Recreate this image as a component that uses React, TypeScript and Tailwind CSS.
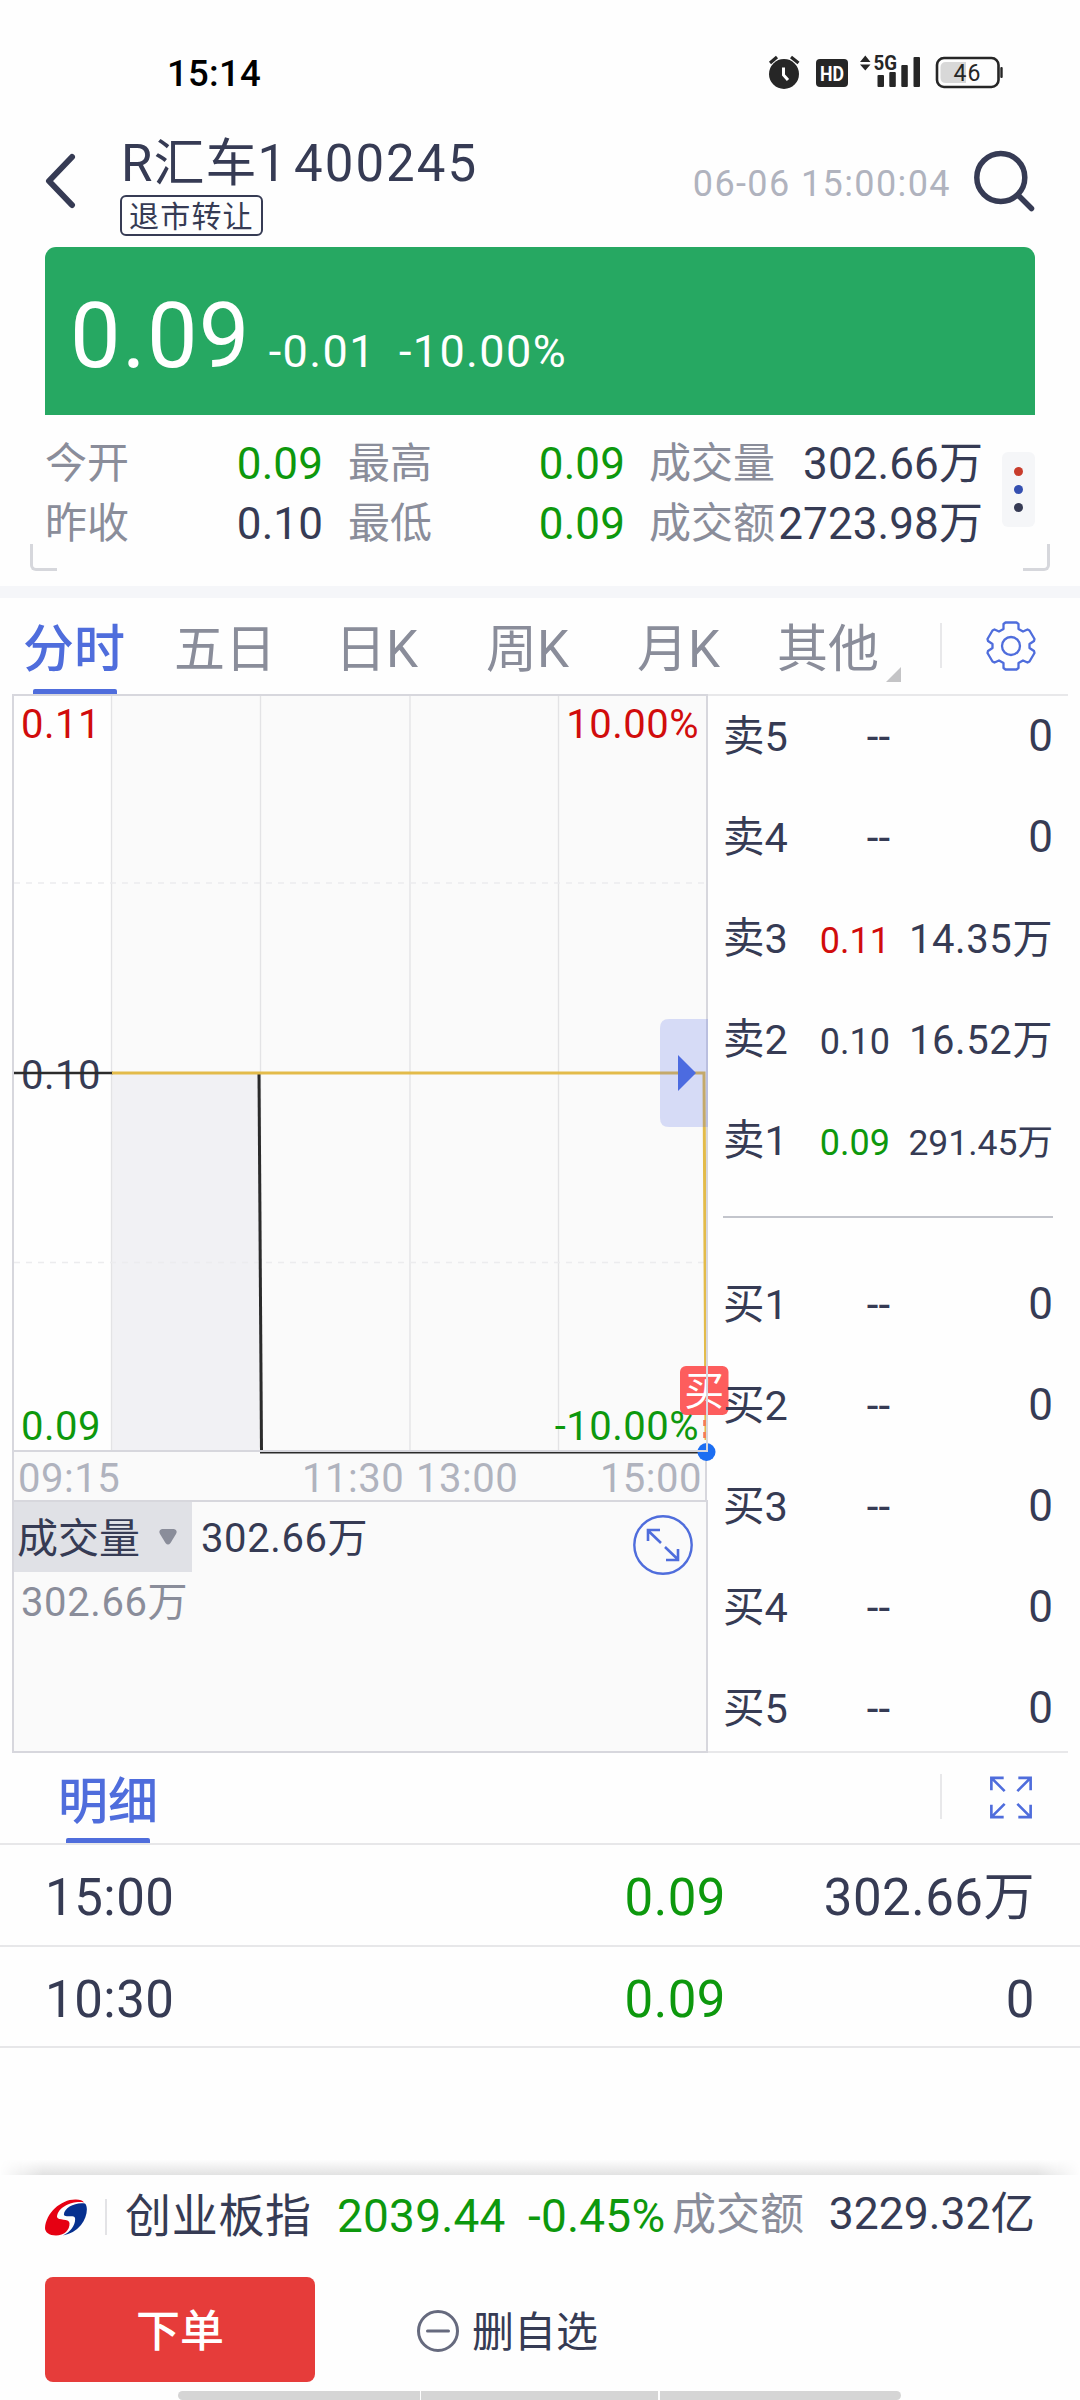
import React from "react";

const tabs = [
  { label: "五日", width: "w-[161px]" },
  { label: "日K", width: "w-[151px]" },
  { label: "周K", width: "w-[151px]" },
  { label: "月K", width: "w-[140px]" },
];

type Level = { name: string; price: string; qty: string; tone?: string; small?: boolean };

const sells: Level[] = [
  { name: "卖5", price: "--", qty: "0" },
  { name: "卖4", price: "--", qty: "0" },
  { name: "卖3", price: "0.11", qty: "14.35万", tone: "text-[#d10c0c]" },
  { name: "卖2", price: "0.10", qty: "16.52万" },
  { name: "卖1", price: "0.09", qty: "291.45万", tone: "text-[#0d980d]", small: true },
];

const buys: Level[] = [
  { name: "买1", price: "--", qty: "0" },
  { name: "买2", price: "--", qty: "0" },
  { name: "买3", price: "--", qty: "0" },
  { name: "买4", price: "--", qty: "0" },
  { name: "买5", price: "--", qty: "0" },
];

const trades = [
  { time: "15:00", price: "0.09", qty: "302.66万" },
  { time: "10:30", price: "0.09", qty: "0" },
];

function StatusBar() {
  return (
    <div className="flex h-[110px] shrink-0 pl-[167px]">
      <div className="mt-[48px] w-[599px] text-[36.500px] leading-[52px] font-medium tracking-[0.300px] text-black">15:14</div>
      <svg className="mt-[50px]" width="240" height="44" viewBox="766 50 240 44" fill="#262626">
        <circle cx="784" cy="74" r="15" />
        <path d="M770 63 L777 57 M791 57 L798.500 63" stroke="#262626" strokeWidth="3.200" fill="none" />
        <path d="M783.500 67.500 V75 L788 80" stroke="#fff" strokeWidth="3" fill="none" />
        <rect x="816" y="59" width="32" height="28" rx="4" />
        <text x="832" y="80.500" fill="#fff" fontFamily="Roboto" fontSize="21" fontWeight="700" textAnchor="middle" textLength="24" lengthAdjust="spacingAndGlyphs">HD</text>
        <path d="M860 62 L865.300 55.500 L870.500 62 Z M860 64.500 H870.500 L865.300 70.500 Z" />
        <text x="873.500" y="70" fontFamily="Roboto" fontSize="20.500" fontWeight="700" textLength="23.500" lengthAdjust="spacingAndGlyphs">5G</text>
        <rect x="877.500" y="75" width="6.500" height="12" rx="1" />
        <rect x="889.300" y="72" width="6.500" height="15" rx="1" />
        <rect x="901.300" y="65" width="6.500" height="22" rx="1" />
        <rect x="913.500" y="57" width="6.500" height="30" rx="1" />
        <path d="M946 62 H966 V83 H946 Q940.500 83 940.500 77.500 V67.500 Q940.500 62 946 62 Z" fill="#d8d8d8" />
        <rect x="937" y="58" width="61.500" height="29" rx="7" fill="none" stroke="#262626" strokeWidth="2.600" />
        <rect x="1000.300" y="67" width="2.400" height="11" rx="1" />
        <text x="967" y="81" fontFamily="Roboto" fontSize="23" textAnchor="middle" textLength="27">46</text>
      </svg>
    </div>
  );
}

function Header() {
  return (
    <div className="flex h-[137px] shrink-0 items-start pr-[45px] pl-[45px]">
      <svg className="mt-[43px]" width="32" height="56" viewBox="0 0 32 56" fill="none" stroke="#363b54" strokeWidth="6" strokeLinecap="round" strokeLinejoin="round">
        <path d="M27 4 L4 28 L27 52" />
      </svg>
      <div className="ml-[43px] pt-[24px]">
        <div className="relative top-[1px] left-[1px] flex h-[58px] gap-[7px] text-[51px] leading-[58px] whitespace-nowrap">
          <span className="tracking-[1px]">R汇车1</span>
          <span className="tracking-[2px]">400245</span>
        </div>
        <div className="mt-[3px] h-[41px] w-[143px] rounded-[6px] border-2 border-[#363b54] pl-[7px] text-[30px] leading-[40px] tracking-[1.2px]">退市转让</div>
      </div>
      <div className="mt-[52px] ml-auto text-[36px] leading-[45px] tracking-[1.400px] text-[#b0b3be]">06-06 15:00:04</div>
      <svg className="mt-[40px] ml-[22px]" width="62" height="64" viewBox="974 150 62 64" fill="none" stroke="#363b54" strokeWidth="5.500" strokeLinecap="round">
        <circle cx="1001.800" cy="177.500" r="24" />
        <path d="M1020 196 L1032.500 208.500" />
      </svg>
    </div>
  );
}

function PriceCard() {
  return (
    <div className="mx-[45px] flex h-[168px] shrink-0 items-baseline rounded-t-[11px] bg-[#26a862] pt-[45px] pl-[25px] text-white">
      <span className="text-[90px] leading-[90px] tracking-[1.3px]">0.09</span>
      <span className="ml-[18px] text-[45px] tracking-[1.400px]">-0.01</span>
      <span className="ml-[23px] text-[45px] tracking-[1.400px]">-10.00%</span>
    </div>
  );
}

function Stat({ label, value, className }: { label: string; value: string; className?: string }) {
  return (
    <div className="flex h-[60px] justify-between leading-[62px] whitespace-nowrap">
      <span className="text-[42px] text-[#8a8d9a]">{label}</span>
      <span className={"text-[44px] tracking-[0.100px] " + (className ?? "")}>{value}</span>
    </div>
  );
}

function Stats() {
  return (
    <div className="relative flex h-[171px] shrink-0 pt-[18px] pl-[45px]">
      <div className="w-[278px]">
        <Stat label="今开" value="0.09" className="text-[#0d980d]" />
        <Stat label="昨收" value="0.10" />
      </div>
      <div className="ml-[25px] w-[277px]">
        <Stat label="最高" value="0.09" className="text-[#0d980d]" />
        <Stat label="最低" value="0.09" className="text-[#0d980d]" />
      </div>
      <div className="ml-[24px] w-[334px]">
        <Stat label="成交量" value="302.66万" />
        <Stat label="成交额" value="2723.98万" />
      </div>
      <div className="mt-[19px] ml-[19px] flex h-[75px] w-[33px] flex-col items-center justify-center gap-[9px] rounded-[6px] bg-[#f5f6f8]">
        <i className="size-[9px] rounded-full bg-[#c83c2c]" />
        <i className="size-[9px] rounded-full bg-[#344fb0]" />
        <i className="size-[9px] rounded-full bg-[#363b54]" />
      </div>
      <div className="absolute bottom-[15px] left-[30px] h-[27px] w-[27px] rounded-bl-[6px] border-b-3 border-l-3 border-[#d6d7dc]" />
      <div className="absolute right-[30px] bottom-[15px] h-[27px] w-[27px] rounded-br-[6px] border-r-3 border-b-3 border-[#d6d7dc]" />
    </div>
  );
}

function ChartTabs() {
  return (
    <div className="flex h-[96px] shrink-0 pl-[24px] text-[51px] leading-[103px] whitespace-nowrap text-[#8a8d9a]">
      <div className="relative w-[150px] font-medium text-[#4f6ddc]">
        <span className="-ml-[1px]">分时</span>
        <div className="absolute bottom-0 left-[9px] h-[5px] w-[84px] rounded-t-[2px] bg-[#4f6ddc]" />
      </div>
      {tabs.map((t) => (
        <div key={t.label} className={t.width}>
          {t.label}
        </div>
      ))}
      <div className="w-[102px]">其他</div>
      <svg className="mt-[69px] ml-[7px]" width="15" height="15" viewBox="0 0 15 15">
        <path d="M15 0 V15 H0 Z" fill="#c4c4c6" />
      </svg>
      <div className="mt-[25px] ml-[39px] h-[45px] w-[2px] bg-[#e8e8ea]" />
      <svg className="mt-[23px] ml-[44px]" width="50" height="50" viewBox="-25 -25 50 50" fill="none" stroke="#4f6ddc" strokeWidth="2.300" strokeLinejoin="round">
        <path d="M-5.500 -23.500 H5.500 L7.500 -22 V-17 L12 -14.500 L16.500 -16.500 L18.500 -15.500 L23.500 -7 L23 -5 L18.500 -2 V2 L23 5 L23.500 7 L18.500 15.500 L16.500 16.500 L12 14.500 L7.500 17 V22 L5.500 23.500 H-5.500 L-7.500 22 V17 L-12 14.500 L-16.500 16.500 L-18.500 15.500 L-23.500 7 L-23 5 L-18.500 2 V-2 L-23 -5 L-23.500 -7 L-18.500 -15.500 L-16.500 -16.500 L-12 -14.500 L-7.500 -17 V-22 Z" />
        <circle r="9" />
      </svg>
    </div>
  );
}

function PriceChart() {
  return (
    <div className="relative h-[758px] text-[40px] leading-[44px] tracking-[0.5px]">
      <svg className="block overflow-visible" width="696" height="758" viewBox="12 694 696 758">
        <rect x="112" y="695" width="595" height="756" fill="#fafafa" />
        <rect x="112" y="1074" width="148" height="377" fill="#f1f1f4" />
        <path d="M111.500 696 V1450 M260.500 696 V1450 M410 696 V1450 M558.500 696 V1450" stroke="#e3e3e5" strokeWidth="1.300" />
        <path d="M14 883 H706 M14 1262.500 H706" stroke="#ececee" strokeWidth="1.300" strokeDasharray="6 6" />
      </svg>
      <span className="absolute top-[9px] left-[9px] text-[#d10c0c]">0.11</span>
      <span className="absolute top-[9px] right-[9px] text-[#d10c0c]">10.00%</span>
      <span className="absolute top-[360px] left-[9px]">0.10</span>
      <span className="absolute top-[711px] left-[9px] text-[#0d980d]">0.09</span>
      <svg className="absolute inset-0 overflow-visible" width="696" height="758" viewBox="12 694 696 758" fill="none">
        <path d="M14 1073 H113" stroke="#2b2b2b" strokeWidth="2.600" />
        <path d="M259 1074 L261.500 1452" stroke="#2b2b2b" strokeWidth="3" />
        <path d="M112 1073 H704 L706 1440" stroke="#e3bb4a" strokeWidth="3" />
        <rect x="680" y="1366" width="48.500" height="49" rx="6" fill="#fd5d5d" />
        <text x="704.300" y="1405" fill="#fff" fontFamily="'Noto Sans CJK SC', sans-serif" fontSize="40" letterSpacing="0" textAnchor="middle">买</text>
        <path d="M704.500 1420 V1446" stroke="#f77a55" strokeWidth="2.600" strokeDasharray="6 6" />
        <path d="M260 1452.500 H700" stroke="#2b2b2b" strokeWidth="2" />
        <circle cx="706.500" cy="1452" r="9" fill="#1c6ef2" />
        <path d="M13 1452 V695 H707 V1451 H13" stroke="#d7d7dd" strokeWidth="2" />
        <path d="M708 1019 H669 Q660 1019 660 1028 V1118 Q660 1127 669 1127 H708 Z" fill="#5068e8" fillOpacity="0.21" />
        <path d="M678 1055 L696 1073 L678 1091 Z" fill="#4c6be0" />
      </svg>
      <span className="absolute top-[711px] right-[9px] text-[#0d980d]">-10.00%</span>
    </div>
  );
}

function VolumePanel() {
  return (
    <div className="h-[253px] border-2 border-[#d7d7dd] bg-[#fafafa] text-[40px] tracking-[0.600px]">
      <div className="flex h-[70px] leading-[74px]">
        <div className="flex w-[178px] items-center bg-[#e0e1e6] pl-[3px] text-[41px] leading-[76px] tracking-normal">
          <span className="relative top-[2px]">成交量</span>
          <svg className="ml-[19px]" width="18" height="16" viewBox="0 0 18 16">
            <path d="M3 0 H15 Q19 1 17 5 L11.500 14 Q9 17 6.500 14 L1 5 Q-1 1 3 0 Z" fill="#8a8d9a" />
          </svg>
        </div>
        <div className="ml-[9px]">302.66万</div>
        <svg className="mt-[13px] ml-auto mr-[13px]" width="60" height="60" viewBox="-30 -30 60 60" fill="none" stroke="#4f6ddc" strokeWidth="2.400">
          <circle r="28.700" />
          <path d="M-2 -2 L-15 -14.500 M-15 -4 V-15 H-3 M2 2 L15 14.500 M15 4 V15 H3" strokeWidth="2.600" />
        </svg>
      </div>
      <div className="pl-[7px] leading-[61px] text-[#8a8d9a]">302.66万</div>
    </div>
  );
}

function BookRow({ name, price, qty, tone, small }: Level) {
  const empty = price === "--";
  return (
    <div className="flex h-[101px] items-baseline leading-[101px] whitespace-nowrap">
      <span className="w-[76px] text-[41.500px]">{name}</span>
      <span className={"w-[91px] text-right " + (empty ? "text-[42px] " : "text-[36px] ") + (tone ?? "")}>{price}</span>
      <span className={"ml-auto " + (empty ? "text-[44px]" : small ? "text-[35.500px]" : "text-[40px] tracking-[0.600px]")}>{qty}</span>
    </div>
  );
}

function OrderBook() {
  return (
    <div className="relative h-[1059px] w-[360px] border-y-2 border-[#e8e8ea]">
      <div className="-mt-[10px] pr-[15px] pl-[15px]">
        {sells.map((l) => <BookRow key={l.name} {...l} />)}
      </div>
      <div className="mt-[25px] mr-[15px] ml-[15px] h-[2px] bg-[#c3c5cc]" />
      <div className="mt-[36px] pr-[15px] pl-[15px]">
        {buys.map((l) => <BookRow key={l.name} {...l} />)}
      </div>
    </div>
  );
}

function Details() {
  return (
    <div className="shrink-0">
      <div className="flex h-[92px] border-b-2 border-[#e7e7e9] pl-[59px] text-[50px] leading-[98px]">
        <div className="relative font-medium text-[#4f6ddc]">
          <span className="-ml-[1px]">明细</span>
          <div className="absolute bottom-0 left-[7px] h-[5px] w-[84px] rounded-t-[2px] bg-[#4f6ddc]" />
        </div>
        <div className="mt-[21px] ml-auto h-[45px] w-[2px] bg-[#e8e8ea]" />
        <svg className="mt-[23px] mr-[48px] ml-[48px]" width="42" height="43" viewBox="0 0 43 43" fill="none" stroke="#4f6ddc" strokeWidth="2.700">
          <path d="M1.400 14 V1.400 H14 M1.400 1.400 L15 15 M29 1.400 H41.600 V14 M41.600 1.400 L28 15 M1.400 29 V41.600 H14 M1.400 41.600 L15 28 M29 41.600 H41.600 V29 M41.600 41.600 L28 28" />
        </svg>
      </div>
      {trades.map((t) => (
        <div key={t.time} className="flex h-[101.500px] border-b-2 border-[#e7e7e9] pr-[45px] pl-[45px] text-[51px] leading-[105px] tracking-[0.500px]">
          <span>{t.time}</span>
          <span className="ml-auto w-[110px] text-right text-[#0d980d]">{t.price}</span>
          <span className="w-[309px] text-right">{t.qty}</span>
        </div>
      ))}
    </div>
  );
}

function Footer() {
  return (
    <div className="mt-auto shrink-0">
      <div className="flex h-[16px]">
        <div className="w-full bg-linear-to-b from-white to-[#e2e2e2] mask-x-from-96% mask-x-to-100%" />
      </div>
      <div className="flex h-[84px] items-start pl-[45px] leading-[82px] whitespace-nowrap">
        <svg className="mt-[24px]" width="42" height="37" viewBox="0 0 42 37">
          <path d="M0 29 C1 14 16 0 31 0.500 C35 0.500 38 1.500 39 3.500 C29 1.500 13 7 12 18 C13 22 24 19 24.500 24 C25 31 19 36.500 11 36.500 C4 36.500 0 33 0 29 Z" fill="#e60012" />
          <path d="M40 4.500 C43.500 8 42 19 36 26 C31 32 25 35 18 36.500 C26 33 31 25 30 19 C29 15.500 21 19 19 16 C18 9 31 2.500 40 4.500 Z" fill="#06308f" />
        </svg>
        <div className="mt-[24px] ml-[18px] h-[36px] w-[2px] bg-[#e3e3e6]" />
        <span className="ml-[18px] w-[212px] text-[46px] tracking-[0.7px]">创业板指</span>
        <span className="w-[191px] text-[46px] tracking-[0.200px] text-[#0d980d]">2039.44</span>
        <span className="w-[144px] text-[46px] tracking-[0.200px] text-[#0d980d]">-0.45%</span>
        <span className="text-[44px] leading-[81px] text-[#8a8d9a]">成交额</span>
        <span className="mr-[45px] ml-auto text-[44.500px] leading-[79px]">3229.32亿</span>
      </div>
      <div className="flex h-[132px] items-start pt-[18px] pl-[45px]">
        <div className="flex h-[105px] w-[270px] items-center justify-center rounded-[8px] bg-[#e63c3a] pt-[4px] text-[44px] font-medium text-white">下单</div>
        <div className="ml-[101px] flex h-[108px] items-center text-[42px]">
          <svg width="44" height="44" viewBox="0 0 44 44" fill="none" stroke="#666a7e" strokeWidth="3" strokeLinecap="round">
            <circle cx="22" cy="22" r="19.500" />
            <path d="M11.500 22 H32.500" />
          </svg>
          <span className="relative top-[1px] ml-[12px]">删自选</span>
        </div>
      </div>
      <div className="mr-auto ml-[178px] flex h-[9px] w-[723px] gap-[1.500px] overflow-hidden rounded-[5px]">
        <div className="w-[241.500px] bg-[#d5d5d5]" />
        <div className="w-[237px] bg-[#d5d5d5]" />
        <div className="flex-1 bg-[#d5d5d5]" />
      </div>
    </div>
  );
}

export default function App() {
  return (
    <div className="flex h-[2400px] w-[1080px] flex-col overflow-hidden bg-[#fefefe] font-[Roboto,'Noto_Sans_CJK_SC',sans-serif] text-[#363b54]">
      <StatusBar />
      <Header />
      <PriceCard />
      <Stats />
      <div className="h-[12px] shrink-0 bg-[#f5f6f9]" />
      <ChartTabs />
      <div className="flex h-[1059px] shrink-0 pl-[12px]">
        <div className="w-[696px]">
          <PriceChart />
          <div className="mr-[1px] flex h-[48px] border-x-2 border-[#d7d7dd] bg-[#fafafa] pr-[3px] pl-[4px] text-[40px] leading-[54px] tracking-[0.500px] text-[#b0b3be]">
            <span className="w-[284px]">09:15</span>
            <span className="w-[114px]">11:30</span>
            <span>13:00</span>
            <span className="ml-auto">15:00</span>
          </div>
          <VolumePanel />
        </div>
        <OrderBook />
      </div>
      <Details />
      <Footer />
    </div>
  );
}
